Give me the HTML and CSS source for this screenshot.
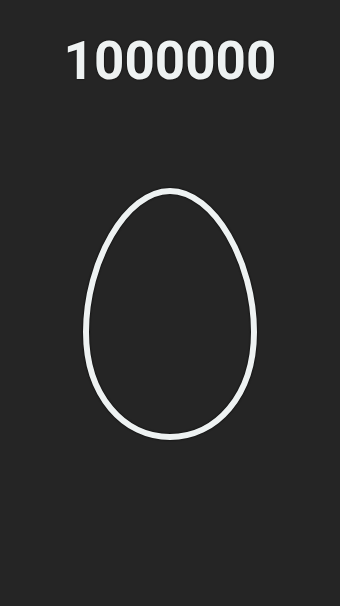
FILE: index.html
```html
<!DOCTYPE html>
<html>
<head>
<meta charset="utf-8">
<link rel="stylesheet" href="styles.css">
</head>
<body>
<main class="screen">
  <h1 class="counter">1000000</h1>
  <div class="egg-wrap">
    <svg class="egg" width="180" height="258" viewBox="80 185 180 258">
      <path d="M170,191 C214,191 254,262 254,332 C254,396 216,437 170,437 C124,437 86,396 86,332 C86,262 126,191 170,191 Z" fill="none" stroke="#eef2f2" stroke-width="6"/>
    </svg>
  </div>
</main>
</body>
</html>
```
FILE: styles.css
```css
html, body {
  margin: 0;
  padding: 0;
  background: #252525;
}
.screen {
  width: 340px;
  height: 606px;
  display: flex;
  flex-direction: column;
  align-items: center;
}
.counter {
  margin: 0;
  padding-top: 35px;
  font-family: Roboto, "Liberation Sans", sans-serif;
  font-weight: 700;
  font-size: 53px;
  line-height: 1;
  color: #eef2f2;
  text-shadow: 0 0 2px rgba(0,0,0,0.9);
}
.egg-wrap {
  margin-top: 97px;
  display: flex;
  justify-content: center;
}
.egg {
  display: block;
  filter: drop-shadow(0 0 1px rgba(0,0,0,0.9));
}
```
